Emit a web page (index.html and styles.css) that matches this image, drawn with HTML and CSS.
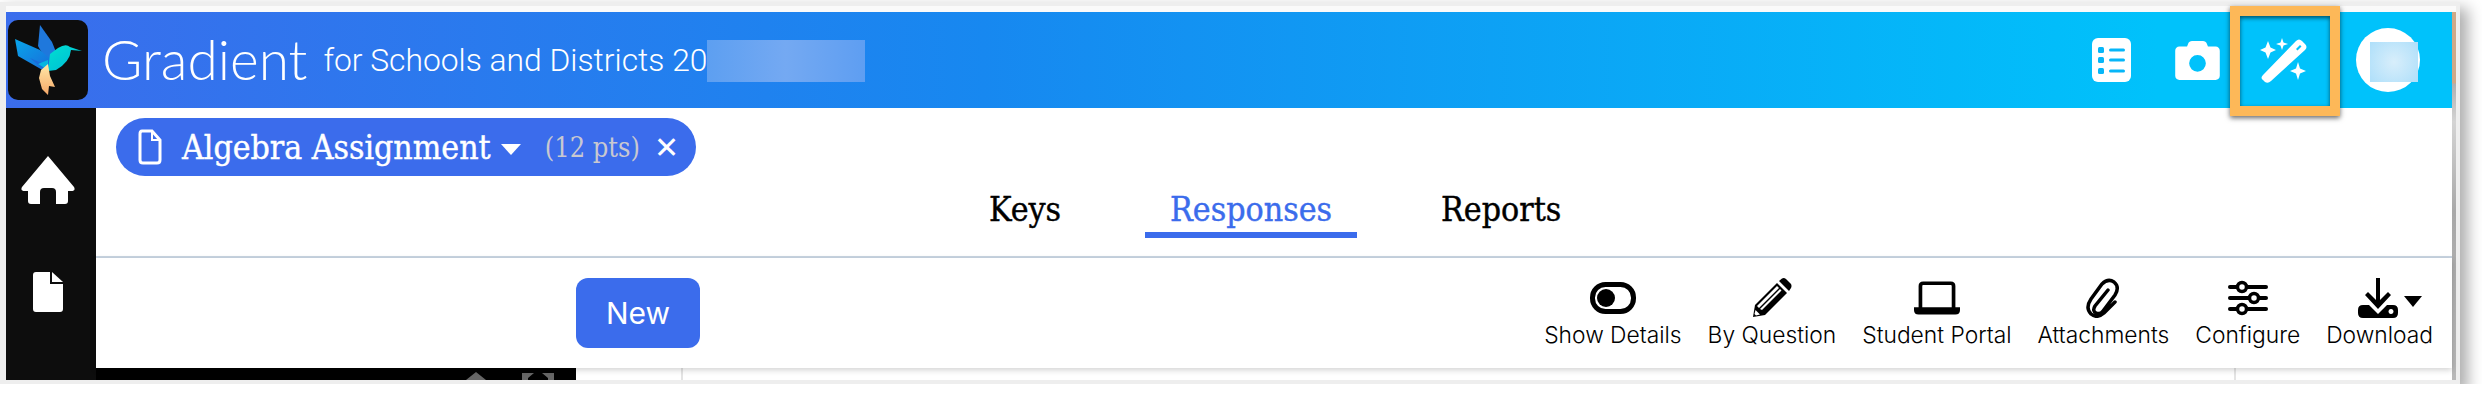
FILE: index.html
```html
<!DOCTYPE html>
<html lang="en">
<head>
  <meta charset="UTF-8" />
  <title>Gradient</title>
  <link rel="stylesheet" href="styles.css">
</head>
<body>
  <div class="frame">
    <div class="app">
      <div class="page">

        <!-- Header -->
        <header class="topbar">
          <div class="logo">
            <svg viewBox="0 0 80 80" width="80" height="80">
              <defs>
                <linearGradient id="birdBody" x1="0" y1="0" x2="1" y2="1">
                  <stop offset="0" stop-color="#00e0d0"/>
                  <stop offset="1" stop-color="#00b8d8"/>
                </linearGradient>
                <linearGradient id="birdTail" x1="0" y1="0" x2="0" y2="1">
                  <stop offset="0" stop-color="#ffe9a8"/>
                  <stop offset="1" stop-color="#f5a868"/>
                </linearGradient>
                <linearGradient id="birdWing" x1="0" y1="0" x2="1" y2="1">
                  <stop offset="0" stop-color="#08a6ea"/>
                  <stop offset="1" stop-color="#1b66d8"/>
                </linearGradient>
              </defs>
              <path d="M32 5 L44 22 L52 42 L38 40 L30 26 Z" fill="#1f78dc"/>
              <path d="M7 19 L32 30 L48 44 L38 52 L24 44 L10 36 Z" fill="url(#birdWing)"/>
              <path d="M22 38 L40 46 L34 48 Z" fill="#1c6bd8"/>
              <path d="M42 34 L50 28 Q58 23 62 27 L74 31 L63 30 Q62 42 48 50 L40 51 Z" fill="url(#birdBody)"/>
              <path d="M40 40 L30 44 L40 50 Z" fill="#05b6e0"/>
              <path d="M40 44 L42 56 L47 67 L41 66 L40 75 L34 69 L31 58 L33 50 Z" fill="url(#birdTail)"/>
            </svg>
          </div>
          <span class="brand">Gradient</span>
          <span class="subtitle">for Schools and Districts 20</span>
          <span class="title-blur"></span>

          <div class="top-actions">
            <div class="top-icon">
              <svg viewBox="0 0 39 44" width="39" height="44">
                <rect width="39" height="44" rx="6" fill="#fff"/>
                <rect x="6" y="9" width="6" height="6" rx="1.5" fill="#06b6f8"/>
                <rect x="6" y="19" width="6" height="6" rx="1.5" fill="#06b6f8"/>
                <rect x="6" y="30" width="6" height="6" rx="1.5" fill="#06b6f8"/>
                <rect x="17" y="10.500" width="16" height="3" rx="1.5" fill="#06b6f8"/>
                <rect x="17" y="20.500" width="16" height="3" rx="1.5" fill="#06b6f8"/>
                <rect x="17" y="31.500" width="16" height="3" rx="1.5" fill="#06b6f8"/>
              </svg>
            </div>
            <div class="top-icon">
              <svg viewBox="0 32 512 448" width="45" height="39">
                <path fill="#fff" fill-rule="evenodd" d="M512 144v288c0 26.5-21.5 48-48 48H48c-26.5 0-48-21.5-48-48V144c0-26.5 21.5-48 48-48h88l12.3-32.9c7-18.700 24.900-31.100 44.900-31.100h125.500c20 0 37.900 12.400 44.900 31.100L376 96h88c26.500 0 48 21.500 48 48zM352 288a96 96 0 1 0-192 0 96 96 0 0 0 192 0z"/>
              </svg>
            </div>
            <div class="top-icon">
              <svg viewBox="0 0 47 45" width="47" height="45">
                <path fill="#fff" fill-rule="evenodd" d="M3 37 L36 3 Q39 0 42 3 L45 6 Q48 9 45 12 L11 43 Q8 46 5 44 L3 42 Q0 40 3 37 Z M36 11 L40 7 L41.500 8.500 L37.500 12.500 Z"/>
                <path fill="#fff" d="M8 3 L10.500 9.500 L16 12 L10.500 14.500 L8 21 L5.500 14.500 L0 12 L5.500 9.500 Z"/>
                <path fill="#fff" d="M22 0 L23.500 4.500 L28 6 L23.500 7.500 L22 12 L20.500 7.500 L16 6 L20.500 4.500 Z"/>
                <path fill="#fff" d="M38 24 L40 30.500 L46 33 L40 35.500 L38 42 L36 35.500 L30 33 L36 30.500 Z"/>
              </svg>
            </div>
            <div class="avatar">
              <span class="avatar-blur"></span>
            </div>
          </div>
          <div class="highlight"></div>
        </header>

        <div class="body-row">
          <!-- Sidebar -->
          <nav class="sidebar">
            <svg class="side-home" viewBox="0 0 54 48" width="54" height="48">
              <path fill="#fff" d="M27 0 L53 31 Q55 35 50 35 L47 35 L47 45 Q47 48 44 48 L35 48 L35 36 Q35 32 31 32 L23 32 Q19 32 19 36 L19 48 L10 48 Q7 48 7 45 L7 35 L4 35 Q-1 35 1 31 Z"/>
            </svg>
            <svg class="side-doc" viewBox="0 0 30 40" width="30" height="40">
              <path fill="#fff" d="M3 0 L17 0 L17 12 L30 12 L30 37 Q30 40 27 40 L3 40 Q0 40 0 37 L0 3 Q0 0 3 0 Z"/>
              <path fill="#fff" d="M19 0 L30 10 L19 10 Z"/>
            </svg>
          </nav>

          <main class="main">
            <div class="pill-row">
              <div class="pill">
                <svg viewBox="0 0 24 36" width="24" height="36">
                  <path fill="none" stroke="#fff" stroke-width="3" d="M4 2 L14 2 L22 11 L22 31 Q22 34 19 34 L5 34 Q2 34 2 31 L2 5 Q2 2 4 2 Z"/>
                  <path fill="#fff" d="M13 2 L15 2 L15 10 L22 10 L22 12 L13 12 Z"/>
                </svg>
                <span class="pill-name">Algebra Assignment</span>
                <span class="caret-white"></span>
                <span class="pill-pts">(12 pts)</span>
                <span class="pill-close">&#10005;</span>
              </div>
            </div>

            <div class="tabs">
              <div class="tab">Keys</div>
              <div class="tab active">Responses</div>
              <div class="tab">Reports</div>
            </div>

            <div class="toolbar">
              <button class="new-btn">New</button>
              <div class="tools">
                <div class="tool">
                  <svg viewBox="0 0 46 32" width="46" height="32">
                    <rect x="2.500" y="2.500" width="41" height="27" rx="13" fill="none" stroke="#000" stroke-width="5"/>
                    <circle cx="16" cy="16" r="9" fill="#000"/>
                  </svg>
                  <span>Show Details</span>
                </div>
                <div class="tool">
                  <svg viewBox="0 0 40 40" width="40" height="40">
                    <path fill="#000" d="M1 39 L3 27 L25 5 L35 15 L13 37 Z"/>
                    <path fill="#fff" d="M5 28 L25 8 L27 10 L7 30 Z M8 31 L28 11 L29.500 12.500 L10 32 Z"/>
                    <path fill="#000" d="M27 3 L30 0.500 Q32 -0.500 34 1 L39 6 Q40 8 39 10 L37 13 Z"/>
                    <path fill="#fff" d="M3.500 32 L8 36.500 L4 37.500 L2.500 36 Z"/>
                  </svg>
                  <span>By Question</span>
                </div>
                <div class="tool">
                  <svg viewBox="0 0 50 36" width="46" height="36">
                    <path fill="none" stroke="#000" stroke-width="4" d="M7 29 L7 5 Q7 2 10 2 L40 2 Q43 2 43 5 L43 29"/>
                    <path fill="#000" d="M0 28 L50 28 L50 31 Q50 36 45 36 L5 36 Q0 36 0 31 Z"/>
                  </svg>
                  <span>Student Portal</span>
                </div>
                <div class="tool">
                  <svg viewBox="0 0 34 40" width="34" height="40">
                    <path fill="none" stroke="#000" stroke-width="3.500" stroke-linecap="round" d="M22 12 L9 28 Q6 33 10 35 Q14 37 17 33 L29 17 Q34 9 28 4 Q22 0 16 6 L5 21 Q-1 30 5 36 Q11 41 18 35 L29 24"/>
                  </svg>
                  <span>Attachments</span>
                </div>
                <div class="tool">
                  <svg viewBox="0 0 40 38" width="40" height="38">
                    <rect y="6" width="40" height="4" rx="2" fill="#000"/>
                    <rect y="17" width="40" height="4" rx="2" fill="#000"/>
                    <rect y="28" width="40" height="4" rx="2" fill="#000"/>
                    <circle cx="14" cy="8" r="4.500" fill="#fff" stroke="#000" stroke-width="3.500"/>
                    <circle cx="26" cy="19" r="4.500" fill="#fff" stroke="#000" stroke-width="3.500"/>
                    <circle cx="14" cy="30" r="4.500" fill="#fff" stroke="#000" stroke-width="3.500"/>
                  </svg>
                  <span>Configure</span>
                </div>
                <div class="tool">
                  <div class="download-icon">
                    <svg viewBox="0 0 40 40" width="40" height="40">
                      <path fill="#000" d="M18 0 L22 0 L22 22 L30 14 L33 17 L20 31 L7 17 L10 14 L18 22 Z"/>
                      <path fill="#000" fill-rule="evenodd" d="M5 27 L11 27 L20 36 L29 27 L35 27 Q40 27 40 32 L40 35 Q40 40 35 40 L5 40 Q0 40 0 35 L0 32 Q0 27 5 27 Z M33 31 a2.500 2.500 0 1 0 0.010 0 Z"/>
                    </svg>
                    <span class="caret-black"></span>
                  </div>
                  <span>Download</span>
                </div>
              </div>
            </div>

            <div class="under-row">
              <div class="under-dark">
                <svg viewBox="0 0 90 8" width="90" height="8">
                  <path fill="#666" d="M0 8 L10 0 L20 8 Z M56 1 L68 1 L62 6 L62 8 L56 8 Z M76 1 L88 1 L88 8 L82 8 L82 6 Z"/>
                </svg>
              </div>
              <div class="under-a"></div>
              <div class="under-b"></div>
              <div class="under-c"></div>
            </div>
          </main>
        </div>
      </div>
      <div class="edge"></div>
    </div>
  </div>
</body>
</html>
```

FILE: styles.css
```css
html {
  overflow: hidden;
}

html, body {
  margin: 0;
  padding: 0;
  background: #fff;
}

/* Screenshot frame */
.frame {
  width: 2460px;
  height: 382px;
  margin-top: 2px;
  box-sizing: border-box;
  border: 4px solid #eee;
  border-left-width: 6px;
  padding-top: 6px;
  background: #fafafa;
  box-shadow: 6px 8px 14px 2px rgba(0, 0, 0, 0.32);
}

.app {
  display: flex;
  height: 368px;
}

.page {
  flex: 1;
  min-width: 0;
  display: flex;
  flex-direction: column;
  background: #fff;
}

.edge {
  width: 4px;
  background: linear-gradient(180deg, #cfa988 0, #cfa988 71px, #b0b0b0 72px, #d4d4d4 110px, #a8a8a8 200px, #b8b8b8 368px);
}

/* Header */
.topbar {
  position: relative;
  display: flex;
  align-items: flex-start;
  height: 96px;
  flex-shrink: 0;
  background: linear-gradient(90deg, #3b6dec 0%, #1788f0 40%, #00c2fb 88%);
  color: #fff;
}

.logo {
  width: 80px;
  height: 80px;
  margin: 8px 0 0 2px;
  background: #0d0d0d;
  border-radius: 10px;
}

.brand {
  margin: 16px 0 0 14px;
  font-family: 'Lato', sans-serif;
  font-weight: 300;
  font-size: 55px;
  line-height: 62px;
}

.subtitle {
  margin: 28px 0 0 16px;
  font-family: 'Roboto', sans-serif;
  font-weight: 300;
  font-size: 31.8px;
  line-height: 40px;
}

.title-blur {
  width: 158px;
  height: 42px;
  margin-top: 28px;
  background: linear-gradient(90deg, #5d9ff1, #74a9f2 50%, #5e9ef2);
}

.top-actions {
  display: flex;
  align-items: center;
  height: 64px;
  margin: 16px 32px 0 auto;
}

.top-icon {
  width: 86px;
  display: flex;
  justify-content: center;
}

.avatar {
  position: relative;
  width: 64px;
  height: 64px;
  margin-left: 30px;
  border-radius: 50%;
  background: #fff;
}

.avatar-blur {
  position: absolute;
  left: 14px;
  top: 14px;
  width: 48px;
  height: 40px;
  background: radial-gradient(circle, #d8eefb, #aedffa);
}

.highlight {
  position: absolute;
  left: 2224px;
  top: -6px;
  width: 110px;
  height: 110px;
  box-sizing: border-box;
  border: 10px solid #fdb858;
  box-shadow: 0 2px 5px rgba(0, 0, 0, 0.6), inset 0 2px 4px rgba(0, 0, 0, 0.6);
}

/* Body */
.body-row {
  flex: 1;
  display: flex;
  min-height: 0;
}

.sidebar {
  width: 90px;
  flex-shrink: 0;
  box-sizing: border-box;
  padding-right: 6px;
  display: flex;
  flex-direction: column;
  align-items: center;
  background: #0d0d0d;
}

.side-home {
  margin-top: 48px;
}

.side-doc {
  margin-top: 68px;
}

.main {
  flex: 1;
  min-width: 0;
  display: flex;
  flex-direction: column;
}

.pill-row {
  height: 68px;
  padding: 10px 0 0 20px;
  box-sizing: border-box;
}

.pill {
  display: flex;
  align-items: center;
  width: 580px;
  height: 58px;
  box-sizing: border-box;
  padding-left: 22px;
  border-radius: 29px;
  background: #3b6cec;
  color: #fff;
  font-family: 'DejaVu Serif', serif;
}

.pill-name {
  margin-left: 20px;
  font-size: 33.5px;
  font-stretch: condensed;
  -webkit-text-stroke: 0.4px #fff;
}

.caret-white {
  width: 0;
  height: 0;
  margin: 4px 0 0 10px;
  border-left: 10px solid transparent;
  border-right: 10px solid transparent;
  border-top: 11px solid #fff;
}

.pill-pts {
  margin-left: 24px;
  font-size: 27px;
  font-stretch: condensed;
  color: #c8c8d0;
}

.pill-close {
  margin-left: 14px;
  font-family: 'DejaVu Sans', sans-serif;
  font-size: 30px;
}

.tabs {
  display: flex;
  gap: 59px;
  height: 80px;
  padding-left: 868px;
  border-bottom: 2px solid #c9d5e2;
  font-family: 'DejaVu Serif', serif;
  font-size: 33.6px;
  font-stretch: condensed;
  -webkit-text-stroke: 0.4px;
  color: #000;
}

.tab {
  height: 62px;
  padding: 11px 25px 0;
  box-sizing: border-box;
  line-height: 46px;
}

.tab.active {
  color: #3b6cec;
  border-bottom: 6px solid #3b6cec;
}

.toolbar {
  position: relative;
  display: flex;
  height: 110px;
  padding-left: 480px;
  padding-right: 19px;
  box-shadow: 0 2px 6px rgba(0, 0, 0, 0.18);
  background: #fff;
}

.new-btn {
  width: 124px;
  height: 70px;
  margin-top: 20px;
  border: none;
  border-radius: 12px;
  background: #3b6cec;
  color: #fff;
  font-family: 'Inter', sans-serif;
  font-size: 30px;
}

.tools {
  display: flex;
  gap: 26px;
  margin-left: auto;
  padding-top: 20px;
}

.tool {
  display: flex;
  flex-direction: column;
  align-items: center;
  font-family: 'Inter', sans-serif;
  font-weight: 300;
  font-size: 22.8px;
  line-height: 28px;
  color: #000;
}

.tool svg {
  height: 40px;
  margin-bottom: 3px;
}

.download-icon {
  display: flex;
  align-items: flex-start;
  padding-left: 20px;
}

.caret-black {
  width: 0;
  height: 0;
  margin: 18px 0 0 6px;
  border-left: 9px solid transparent;
  border-right: 9px solid transparent;
  border-top: 11px solid #000;
}

.under-row {
  flex: 1;
  display: flex;
}

.under-dark {
  width: 480px;
  background: #000;
  display: flex;
  align-items: flex-end;
  padding-left: 370px;
  box-sizing: border-box;
}

.under-a {
  width: 105px;
  border-right: 2px solid #e4e4e4;
}

.under-b {
  width: 1551px;
  border-right: 2px solid #e4e4e4;
}

.under-c {
  flex: 1;
}
```
